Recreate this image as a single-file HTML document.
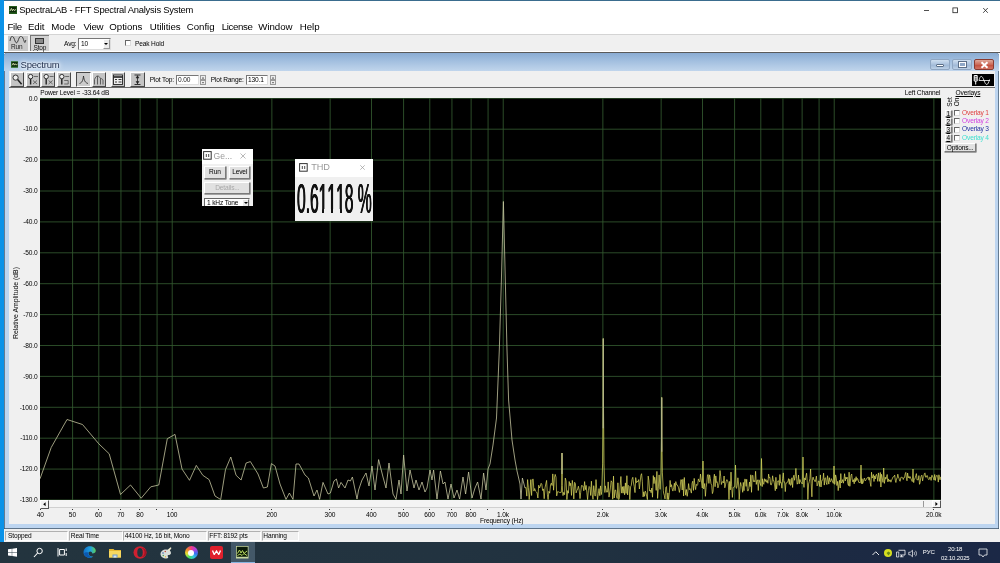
<!DOCTYPE html>
<html><head><meta charset="utf-8"><title>SpectraLAB</title>
<style>
*{box-sizing:border-box}
html,body{margin:0;padding:0}
body{width:1000px;height:563px;overflow:hidden;position:relative;background:#fff;font-family:"Liberation Sans",sans-serif;font-size:6.6px;letter-spacing:-0.15px;color:#000}
.a{position:absolute}
.t{position:absolute;white-space:nowrap;line-height:1}
#desk{left:0;top:0;width:4px;height:542px;background:#0a92e8}
#topline{left:4px;top:0;width:996px;height:0.800px;background:#3a6c8e}
#title{left:4px;top:1px;width:996px;height:18px;background:#fff}
#menu{left:4px;top:19px;width:996px;height:15px;background:#fff}
#menu .t{top:3.2px;font-size:9.7px;letter-spacing:-0.05px;margin-left:-0.7px}
#tb{left:4px;top:34px;width:996px;height:18px;background:#f0f0f0;border-top:1px solid #d4d4d4;border-bottom:1px solid #fff}
#mdiline{left:4px;top:52px;width:996px;height:1px;background:#5a5a5a}
/* child */
#child{left:4px;top:53px;width:995px;height:475.5px;background:#bdd5f0;border-radius:3px 3px 0 0;box-shadow:inset 0 0 0 0.7px #3f5468}
#ctitle{left:0;top:0;width:995px;height:18px;background:linear-gradient(180deg,#8aacd3 0,#9dbbdd 35%,#b3cbe6 75%,#c0d5ec 100%);border-radius:3px 3px 0 0}
#client{left:4.7px;top:18px;width:986px;height:453px;background:#f0f0f0}
#plot{left:40px;top:98px;width:901px;height:402px;background:#000;overflow:hidden}
.yl{position:absolute;left:10px;width:27.5px;text-align:right;font-size:6.6px;line-height:9px;white-space:nowrap}
.xl{position:absolute;top:510.5px;width:30px;text-align:center;font-size:6.6px;line-height:8px;white-space:nowrap}
.tick{position:absolute;top:508.5px;width:1px;height:1.5px;background:#333}
.btn{position:absolute;background:#c4c4c4;border:1px solid;border-color:#fff #484848 #484848 #fff}
.btn.dn{border-color:#484848 #fff #fff #484848;background:#cccccc}
#status{left:4px;top:529px;width:996px;height:13px;background:#f0f0f0}
#status .p{position:absolute;top:1.5px;height:10.5px;border:1px solid;border-color:#b0b0b0 #fff #fff #b0b0b0;font-size:6.6px;line-height:8px;padding-left:2px;white-space:nowrap}
#task{left:0;top:542px;width:1000px;height:21px;background:linear-gradient(90deg,#23343e 0,#223340 45%,#203140 60%,#1c2a42 82%,#1b2846 100%)}
.wb{position:absolute;background:#e1e1e1;border:1px solid;border-color:#fff #7a7a7a #7a7a7a #fff;box-shadow:0.5px 0.5px 0 #555;font-size:6.6px;text-align:center;white-space:nowrap}
</style></head><body><div id="root" style="position:absolute;left:0;top:0;width:1000px;height:563px;overflow:hidden;will-change:transform">
<div id="desk" class="a"></div>
<div id="title" class="a">
  <svg class="a" style="left:4.5px;top:5px" width="8" height="8" viewBox="0 0 8 8"><rect width="8" height="8" fill="#245c1c"/><rect x="0.8" y="1" width="6.4" height="5.4" fill="#0c2a0a"/><path d="M1 5 L2.4 2.4 L3.4 4.8 L4.4 3 L5.4 4.6 L7 3.4" stroke="#e8f0c0" stroke-width="0.8" fill="none"/></svg>
  <div class="t" style="left:15.300px;top:3.500px;font-size:9.4px;letter-spacing:-0.23px">SpectraLAB - FFT Spectral Analysis System</div>
  <svg class="a" style="left:915px;top:4px" width="75" height="12" viewBox="0 0 75 12"><path d="M5 5.5h5" stroke="#222" stroke-width="0.8" fill="none"/><rect x="33.9" y="2.9" width="4.6" height="4.8" stroke="#222" stroke-width="0.8" fill="none"/><path d="M64.2 3l4.6 4.8M68.8 3l-4.6 4.8" stroke="#222" stroke-width="0.8" fill="none"/></svg>
</div>
<div id="topline" class="a"></div>
<div id="menu" class="a">
  <div class="t" style="left:4.200px;letter-spacing:-0.300px">File</div>
  <div class="t" style="left:24.6px">Edit</div>
  <div class="t" style="left:48px">Mode</div>
  <div class="t" style="left:80.200px;letter-spacing:-0.250px">View</div>
  <div class="t" style="left:106px">Options</div>
  <div class="t" style="left:146.5px">Utilities</div>
  <div class="t" style="left:183.5px">Config</div>
  <div class="t" style="left:218.5px;letter-spacing:-0.400px">License</div>
  <div class="t" style="left:255px">Window</div>
  <div class="t" style="left:296.5px">Help</div>
</div>
<div id="tb" class="a">
  <div class="a" style="left:0;top:0;width:4px;height:16px;background:#fafafa"></div>
  <div class="a" style="left:4px;top:1px;width:20px;height:15px;background:#c9c9c9"></div>
  <svg class="a" style="left:5px;top:1px" width="18" height="8" viewBox="0 0 18 8"><path d="M1 5 C2 -1,4 -1,5.5 3.5 S8 8,9.5 3.5 S13 -1,14.5 3.5 S16 7,16.8 4" stroke="#333" stroke-width="0.9" fill="none"/></svg>
  <div class="t" style="left:7px;top:9px;font-size:6.5px;color:#222">Run</div>
  <div class="a" style="left:25.5px;top:0;width:19.5px;height:16px;background:#d2d2d2;border-left:1px solid #777;border-top:1px solid #777"></div>
  <div class="a" style="left:31px;top:3px;width:9px;height:5.5px;background:#8a8a8a;border:1px solid #333"></div>
  <div class="t" style="left:29.5px;top:9.5px;font-size:6.5px;color:#111"><u style="text-underline-offset:0.200px;text-decoration-thickness:0.600px">S</u>top</div>
  <div class="t" style="left:60px;top:5.800px;font-size:6.6px">Avg:</div>
  <div class="a" style="left:74px;top:2.500px;width:33px;height:12.300px;background:#fff;border:1px solid;border-color:#777 #ddd #ddd #777"></div>
  <div class="t" style="left:77px;top:5.5px;font-size:6.6px">10</div>
  <div class="a" style="left:98.5px;top:4px;width:7.5px;height:9.5px;background:#ececec;border:1px solid;border-color:#fff #999 #999 #fff"></div>
  <div class="a" style="left:100px;top:7.500px;width:0;height:0;border-left:2px solid transparent;border-right:2px solid transparent;border-top:2.5px solid #000"></div>
  <div class="a" style="left:120.5px;top:4.800px;width:6px;height:6px;background:#fff;border:1px solid;border-color:#666 #ddd #ddd #666"></div>
  <div class="t" style="left:131px;top:5.5px;font-size:6.6px">Peak Hold</div>
</div>
<div id="mdiline" class="a"></div>

<div id="child" class="a">
  <div id="ctitle" class="a"></div>
  <svg class="a" style="left:6.500px;top:8px" width="7.500" height="7" viewBox="0 0 8 7"><rect width="8" height="7" fill="#2a6a22"/><rect x="0.8" y="0.8" width="6.4" height="5" fill="#0c2a0a"/><path d="M1 4.4 L2.4 2 L3.4 4.2 L4.4 2.6 L5.4 4 L7 3" stroke="#e8f0c0" stroke-width="0.8" fill="none"/></svg>
  <div class="t" style="left:16.5px;top:7.2px;font-size:9.5px;letter-spacing:-0.2px;color:#1a2a4a;text-shadow:0 0 2px #fff,0 0 4px #fff,0 0 6px #fff">Spectrum</div>
  <!-- caption buttons -->
  <div class="a" style="left:925.5px;top:5.5px;width:20.5px;height:11.5px;border:1px solid #8fa6c2;border-radius:2px;background:linear-gradient(#cfdff0,#a9c0dc 50%,#9bb5d4 51%,#bcd0e6)"></div>
  <div class="a" style="left:932px;top:11px;width:8px;height:3px;background:#fff;border:0.5px solid #5c6f88;border-radius:1px"></div>
  <div class="a" style="left:947.5px;top:5.5px;width:20.5px;height:11.5px;border:1px solid #8fa6c2;border-radius:2px;background:linear-gradient(#cfdff0,#a9c0dc 50%,#9bb5d4 51%,#bcd0e6)"></div>
  <div class="a" style="left:955px;top:8.500px;width:6.500px;height:5.500px;background:#8fa8c8;border:1.300px solid #fff;outline:0.600px solid #5c6f88"></div>
  <div class="a" style="left:969.5px;top:5.5px;width:20.5px;height:11.5px;border:1px solid #8a3a30;border-radius:2px;background:linear-gradient(#e0aa9c,#cc6a58 50%,#c04c3a 51%,#d27464)"></div>
  <svg class="a" style="left:975.5px;top:7.5px" width="9" height="8" viewBox="0 0 9 8"><path d="M1.5 1.2l6 5.6M7.5 1.2l-6 5.6" stroke="#fff" stroke-width="1.9" fill="none"/></svg>
  <div id="client" class="a"></div>
</div>

<!-- child toolbar (page coords) -->
<div class="a" style="left:9px;top:87px;width:986px;height:1px;background:#6a6a6a"></div>
<div class="btn" style="left:10px;top:72px;width:14.3px;height:15px"></div>
<div class="btn" style="left:25.6px;top:72px;width:14.3px;height:15px"></div>
<div class="btn" style="left:41.2px;top:72px;width:14.3px;height:15px"></div>
<div class="btn" style="left:56.8px;top:72px;width:14.3px;height:15px"></div>
<div class="btn dn" style="left:76.2px;top:72px;width:14.5px;height:15px"></div>
<div class="btn" style="left:91.6px;top:72px;width:14.3px;height:15px"></div>
<div class="btn" style="left:110.6px;top:72px;width:14.6px;height:15px"></div>
<div class="btn" style="left:130px;top:72px;width:14.6px;height:15px"></div>
<svg class="a" style="left:10px;top:72px" width="136" height="15" viewBox="0 0 136 15">
  <g fill="none" stroke="#222" stroke-width="0.9">
    <circle cx="5.6" cy="5.6" r="2.6" fill="#eee"/><path d="M7.6 7.6l4 4.6" stroke-width="1.5"/>
    <circle cx="20.6" cy="4.6" r="2.2" fill="#eee"/><path d="M20.6 7v5.5" stroke-width="1.4"/><path d="M23 8.5l4 3.5m0-3.5l-4 3.5M24 4.5h4" stroke-width="0.7" stroke="#444"/>
    <circle cx="36.2" cy="4.6" r="2.2" fill="#eee"/><path d="M36.2 7v5.5" stroke-width="1.4"/><path d="M38.6 8.5l4 3.5m0-3.5l-4 3.5M39.6 4.5h4" stroke-width="0.7" stroke="#444"/>
    <circle cx="51.8" cy="4.6" r="2.2" fill="#eee"/><path d="M51.8 7v5.5" stroke-width="1.4"/><path d="M54.2 8.5h4v3.5h-4M55.2 4.5h4" stroke-width="0.7" stroke="#444"/>
    <path d="M69.500 11.500c2.400-.8 3.400-2.500 4-7.500c.7 5 1.800 6.700 4.500 7.500" stroke-width="0.800"/>
    <path d="M84.500 12.500v-5c1-2.500 2-3.500 3-3.500v8.500m0-8.500c1.500 0 2 1 3 2.500v6m2.500 0v-4.500c-.8-1.200-1.500-1.500-2.500-1.500" stroke="#444" stroke-width="0.8"/>
    <rect x="103.500" y="3" width="9" height="9.500" fill="#eee" stroke="#222"/><path d="M103.500 5h9" stroke-width="1.600"/><path d="M105 7.500h2m1.500 0h3M105 10h2m1.500 0h3" stroke-width="0.9"/>
    <path d="M124.500 3h6M124.500 12.500h6" stroke-width="0.9"/><path d="M127.500 3.500v8.500" stroke-width="0.8"/><path d="M126 6l1.500-2.200L129 6zM126 9.500l1.500 2.200L129 9.500z" fill="#222" stroke-width="0.5"/>
  </g>
</svg>
<div class="t" style="left:149.700px;top:76.5px;font-size:6.6px">Plot Top:</div>
<div class="a" style="left:176px;top:74.5px;width:22.5px;height:10.5px;background:#fff;border:1px solid;border-color:#777 #ddd #ddd #777"></div>
<div class="t" style="left:178px;top:76.5px;font-size:6.6px;color:#222">0.00</div>
<div class="a" style="left:200px;top:74.5px;width:6px;height:5.200px;background:#ececec;border:0.500px solid #999"></div>
<div class="a" style="left:200px;top:79.800px;width:6px;height:5.200px;background:#ececec;border:0.500px solid #999"></div>
<div class="t" style="left:210.800px;top:76.5px;font-size:6.6px">Plot Range:</div>
<div class="a" style="left:245.700px;top:74.5px;width:22.800px;height:10.5px;background:#fff;border:1px solid;border-color:#777 #ddd #ddd #777"></div>
<div class="t" style="left:248px;top:76.5px;font-size:6.6px">130.1</div>
<div class="a" style="left:270px;top:74.5px;width:6px;height:5.200px;background:#ececec;border:0.500px solid #999"></div>
<div class="a" style="left:270px;top:79.800px;width:6px;height:5.200px;background:#ececec;border:0.500px solid #999"></div>
<svg class="a" style="left:200px;top:74.500px" width="76" height="11" viewBox="0 0 76 11"><path d="M2 3.400l1-1.400l1 1.400zM2 7.200l1 1.400l1-1.400zM72 3.400l1-1.400l1 1.400zM72 7.200l1 1.400l1-1.400z" fill="#222"/></svg>
<!-- black icon top-right -->
<div class="a" style="left:972px;top:73.800px;width:22px;height:12px;background:#000"></div>
<svg class="a" style="left:972px;top:73.800px" width="22" height="12" viewBox="0 0 22 12"><path d="M2.200 1.500h3v5.500h-3zM3.700 7v3.500M2.200 3.200h3M2.200 5h3" stroke="#fff" stroke-width="1" fill="none"/><path d="M7 6.500c1.200-5.500 3-5.500 5 0s3.800 5.500 5.500-1M7 6.500h11" stroke="#fff" stroke-width="0.800" fill="none"/></svg>

<!-- plot -->
<div class="t" style="left:40.200px;top:89.700px;font-size:6.6px">Power Level = -33.64 dB</div>
<div class="t" style="left:904.700px;top:89.700px;font-size:6.6px">Left Channel</div>
<div id="plot" class="a">
<svg class="a" style="left:0;top:0" width="901" height="402" viewBox="0 0 901 402">
<g stroke="#33592f" stroke-width="0.85"><line x1="32.58" y1="0" x2="32.58" y2="402"/><line x1="58.79" y1="0" x2="58.79" y2="402"/><line x1="80.95" y1="0" x2="80.95" y2="402"/><line x1="100.14" y1="0" x2="100.14" y2="402"/><line x1="117.07" y1="0" x2="117.07" y2="402"/><line x1="132.22" y1="0" x2="132.22" y2="402"/><line x1="231.86" y1="0" x2="231.86" y2="402"/><line x1="290.15" y1="0" x2="290.15" y2="402"/><line x1="331.50" y1="0" x2="331.50" y2="402"/><line x1="363.58" y1="0" x2="363.58" y2="402"/><line x1="389.79" y1="0" x2="389.79" y2="402"/><line x1="411.95" y1="0" x2="411.95" y2="402"/><line x1="431.14" y1="0" x2="431.14" y2="402"/><line x1="448.07" y1="0" x2="448.07" y2="402"/><line x1="463.22" y1="0" x2="463.22" y2="402"/><line x1="562.86" y1="0" x2="562.86" y2="402"/><line x1="621.15" y1="0" x2="621.15" y2="402"/><line x1="662.50" y1="0" x2="662.50" y2="402"/><line x1="694.58" y1="0" x2="694.58" y2="402"/><line x1="720.79" y1="0" x2="720.79" y2="402"/><line x1="742.95" y1="0" x2="742.95" y2="402"/><line x1="762.14" y1="0" x2="762.14" y2="402"/><line x1="779.07" y1="0" x2="779.07" y2="402"/><line x1="794.22" y1="0" x2="794.22" y2="402"/><line x1="893.86" y1="0" x2="893.86" y2="402"/><line x1="0" y1="0.30" x2="901" y2="0.30"/><line x1="0" y1="31.20" x2="901" y2="31.20"/><line x1="0" y1="62.10" x2="901" y2="62.10"/><line x1="0" y1="93.00" x2="901" y2="93.00"/><line x1="0" y1="123.90" x2="901" y2="123.90"/><line x1="0" y1="154.80" x2="901" y2="154.80"/><line x1="0" y1="185.70" x2="901" y2="185.70"/><line x1="0" y1="216.60" x2="901" y2="216.60"/><line x1="0" y1="247.49" x2="901" y2="247.49"/><line x1="0" y1="278.39" x2="901" y2="278.39"/><line x1="0" y1="309.29" x2="901" y2="309.29"/><line x1="0" y1="340.19" x2="901" y2="340.19"/><line x1="0" y1="371.09" x2="901" y2="371.09"/><line x1="0" y1="401.99" x2="901" y2="401.99"/></g>
<polyline fill="none" stroke="#c9c9a2" stroke-width="0.78" stroke-linejoin="round" points="0.0,380.8 11.2,349.5 27.0,321.5 42.5,326.5 58.8,345.8 69.2,355.8 80.5,396.5 90.5,387.0 101.2,400.2 110.8,388.8 118.8,387.0 127.3,340.7 135.0,336.4 142.0,371.0 149.5,382.3 156.3,367.4 162.8,377.3 169.1,381.6 175.0,398.0 180.7,401.5 185.5,371.5 190.8,359.0 196.1,377.3 201.1,382.0 206.1,365.0 210.4,363.6 218.0,376.0 223.4,390.0 227.4,389.0 231.4,365.6 235.0,368.0 240.0,386.0 246.0,401.4 249.4,395.0 253.0,401.4 256.0,366.0 259.0,366.0 265.0,377.0 268.4,380.0 274.0,398.0 277.0,392.0 279.6,401.4 283.0,384.4 288.0,396.0 290.4,395.0 294.0,383.0 296.4,381.0 298.6,390.0 301.0,384.4 305.0,390.0 308.0,382.0 310.4,383.0 312.4,379.0 317.0,401.0 318.6,392.0 322.0,382.0 326.0,375.0 329.0,388.0 332.0,368.0 335.0,392.0 338.6,361.6 343.0,379.0 346.0,390.0 349.0,365.0 353.0,396.0 356.0,401.4 359.0,382.0 361.0,396.0 363.6,357.0 367.0,393.0 370.0,372.0 374.0,390.0 376.0,382.0 379.0,392.0 382.0,384.0 385.0,394.0 387.0,390.0 390.0,372.0 392.0,382.0 393.6,372.0 397.0,401.0 400.4,373.0 403.0,386.0 405.0,384.0 408.0,401.0 411.0,386.0 414.0,400.0 417.0,392.0 419.6,401.0 423.0,379.0 425.6,396.0 428.6,374.0 432.0,400.0 435.0,390.0 437.6,384.0 441.0,401.0 443.6,375.0 446.0,392.0 448.0,371.0 450.0,366.0 453.0,347.0 456.5,320.0 459.3,252.0 461.4,182.0 463.4,103.5 465.3,182.0 467.0,252.0 468.6,302.0 472.0,342.0 475.0,362.0 477.0,373.0 480.0,386.0 481.0,401.0 482.4,380.0 485.0,390.0"/>
<polyline fill="none" stroke="#e0dc60" stroke-width="0.7" stroke-linejoin="round" points="485.0,390.0 486.0,389.5 486.8,398.1 487.6,381.6 488.4,389.7 489.2,401.6 490.0,392.8 490.8,381.6 491.6,397.5 492.4,381.4 493.2,381.1 493.9,393.1 494.7,390.5 495.5,393.1 496.3,393.8 497.1,395.0 497.9,400.0 498.7,387.2 499.5,390.0 500.3,388.1 501.1,385.3 501.8,386.1 502.6,392.5 503.4,390.9 504.2,400.7 505.0,389.9 505.8,386.0 506.6,382.4 507.4,396.9 508.1,401.6 508.9,393.3 509.7,395.2 510.5,387.0 511.3,385.1 512.1,387.5 512.8,375.9 513.6,392.2 514.4,379.9 515.2,376.4 516.0,379.2 516.7,397.9 517.5,393.7 518.3,393.7 519.1,394.3 519.9,394.5 521.3,394.3 521.7,387.2 521.8,372.7 522.0,355.0 522.2,372.7 522.3,387.2 522.7,395.3 523.0,397.6 523.8,394.3 524.6,396.7 525.3,380.1 526.1,382.9 526.9,401.6 527.7,392.6 528.4,395.2 529.2,383.5 530.0,387.8 530.7,385.2 531.5,397.4 532.3,382.4 533.1,388.7 533.8,400.9 534.6,384.3 535.4,385.6 536.1,394.9 536.9,392.6 537.7,391.0 538.4,388.2 539.2,392.1 540.0,400.6 540.7,394.3 541.5,387.5 542.3,387.8 543.0,388.0 543.8,392.8 544.6,383.6 545.3,391.7 546.1,387.4 546.9,394.9 547.6,401.6 548.4,392.5 549.1,388.5 549.9,389.3 550.7,397.5 551.4,383.2 552.2,396.3 553.0,401.3 553.7,387.7 554.5,394.5 555.2,398.1 556.0,381.6 556.7,390.9 557.5,401.6 558.3,395.8 559.0,390.6 559.8,397.7 560.5,387.9 561.3,396.6 561.7,393.5 562.6,365.9 563.1,309.4 563.3,240.6 563.5,309.4 564.0,365.9 564.9,394.5 565.2,387.8 566.0,391.0 566.7,394.2 567.5,394.0 568.2,383.9 569.0,399.1 569.7,395.0 570.5,389.1 571.2,382.8 572.0,384.2 572.7,401.2 573.5,378.1 574.2,400.0 575.0,392.1 575.7,392.1 576.4,397.8 577.2,400.5 577.9,384.8 578.7,401.6 579.4,399.9 580.2,387.3 580.9,378.5 581.7,395.1 582.4,388.7 583.1,395.2 583.9,388.3 584.6,396.8 585.4,384.9 586.1,395.4 586.9,377.7 587.6,396.9 588.3,387.4 589.1,388.3 589.8,401.6 590.6,388.8 591.3,387.3 592.0,381.4 592.8,379.3 593.5,385.0 594.2,388.4 595.0,394.6 595.7,379.6 596.5,384.7 597.2,383.2 597.9,383.9 598.7,381.6 599.4,391.0 600.1,384.6 600.9,377.3 601.6,375.7 602.3,383.2 603.1,398.9 603.8,393.8 604.5,398.3 605.3,393.1 606.0,394.9 606.7,398.1 607.4,401.6 608.2,378.1 608.9,382.7 609.6,393.1 610.4,392.1 611.1,394.7 611.8,390.0 612.5,399.2 613.3,377.6 614.0,385.6 614.7,379.2 615.4,383.0 616.2,392.4 616.9,373.4 617.6,400.4 618.3,390.7 619.1,376.9 620.1,391.4 621.0,374.9 621.5,340.8 621.7,299.4 621.9,340.8 622.4,374.9 623.3,392.4 623.6,395.1 624.3,397.3 625.0,400.9 625.8,389.4 626.5,388.6 627.2,401.6 627.9,394.9 628.6,401.6 629.4,394.5 630.1,382.4 630.8,389.0 631.5,386.7 632.2,390.9 632.9,393.1 633.6,389.7 634.4,385.2 635.1,392.7 635.8,383.6 636.5,386.8 637.2,386.8 637.9,388.1 638.6,389.8 639.4,394.4 640.1,389.9 640.8,381.7 641.5,381.9 642.2,392.0 642.9,381.3 643.6,398.0 644.3,379.5 645.0,390.3 645.7,397.2 646.4,391.5 647.2,398.3 647.9,393.4 648.6,385.6 649.3,391.6 650.0,390.6 650.7,392.8 651.4,395.1 652.1,385.2 652.8,383.2 653.5,392.4 654.2,380.4 654.9,387.5 655.6,391.6 656.3,386.3 657.0,387.5 657.7,386.5 658.4,380.9 659.1,382.9 659.8,383.9 660.5,376.1 662.3,390.0 663.0,363.0 663.7,391.0 664.0,389.7 664.7,385.5 665.4,398.3 666.1,389.3 666.8,384.8 667.5,376.9 668.2,376.5 668.9,385.4 669.6,376.9 670.3,380.5 671.0,385.8 671.7,387.2 672.4,395.6 673.1,393.3 673.8,380.4 674.4,376.2 675.1,388.7 675.8,377.9 676.5,384.4 677.2,383.8 677.9,389.9 678.6,387.6 679.3,384.4 680.0,372.5 680.7,378.2 681.4,386.5 682.1,384.0 682.8,383.6 683.4,384.9 684.1,378.0 684.8,389.8 685.5,386.9 686.2,383.2 686.9,381.6 687.6,382.7 688.3,385.5 689.0,401.6 689.7,383.4 690.3,391.9 691.0,374.1 691.7,388.5 692.4,399.4 693.1,389.5 694.8,388.7 695.5,367.0 696.2,389.7 696.5,390.4 697.2,387.6 697.9,379.8 698.6,386.0 699.2,401.6 699.9,391.5 700.6,384.5 701.3,387.9 702.0,388.6 702.7,394.3 703.3,384.4 704.0,392.7 704.7,381.2 705.4,381.3 706.1,388.4 706.7,381.3 707.4,392.7 708.1,393.0 708.8,390.7 709.5,384.0 710.1,388.6 710.8,376.8 711.5,394.3 712.2,377.8 712.9,377.3 713.5,383.6 714.2,382.6 714.9,383.9 715.6,373.3 716.3,386.4 716.9,382.8 717.6,381.8 718.3,392.5 719.0,381.8 720.8,387.6 721.5,360.5 722.2,388.6 722.5,380.8 723.2,385.1 723.8,386.3 724.5,380.7 725.2,383.5 725.9,381.4 726.5,384.3 727.2,382.4 727.9,385.3 728.6,376.1 729.2,379.9 729.9,379.3 730.6,386.5 731.2,387.1 731.9,384.7 732.6,377.8 733.3,383.0 733.9,382.7 734.6,386.9 735.3,392.7 735.9,379.3 736.6,390.9 737.3,384.5 737.9,382.8 738.6,382.8 739.3,387.4 739.9,376.5 740.6,385.0 741.3,384.6 741.9,390.2 742.6,380.7 743.3,374.9 743.9,384.3 744.6,383.8 745.3,393.6 745.9,385.2 746.6,385.2 747.3,383.9 747.9,383.7 748.6,380.6 749.3,386.4 749.9,381.2 750.6,387.4 751.3,386.4 751.9,379.8 752.6,389.5 753.2,380.0 753.9,377.2 754.6,382.3 755.2,378.4 755.9,370.4 756.6,380.3 757.2,386.2 757.9,384.3 758.5,377.0 759.2,385.9 759.9,381.5 760.5,383.4 762.3,386.0 763.0,359.0 763.7,387.0 764.0,389.4 764.7,379.9 765.3,382.0 766.0,378.0 766.6,375.2 767.3,384.6 767.9,401.6 768.6,386.0 769.3,383.4 769.9,380.6 770.6,371.0 771.2,385.8 771.9,398.8 772.5,380.2 773.2,379.1 773.8,381.9 774.5,382.0 775.1,383.8 775.8,381.2 776.4,378.1 777.1,387.9 777.8,386.3 778.4,383.1 779.1,383.0 779.7,388.5 780.4,376.9 781.0,389.0 781.7,383.1 782.3,381.9 783.0,381.4 783.6,375.1 784.3,387.1 784.9,380.4 785.6,379.7 786.2,384.5 786.9,386.6 787.5,377.7 788.2,381.9 788.8,386.1 789.4,379.7 790.1,383.5 790.7,383.7 791.4,380.6 793.3,385.4 794.0,368.0 794.7,386.4 795.0,384.4 795.6,376.9 796.3,380.1 796.9,387.5 797.6,383.4 798.2,392.6 798.9,386.2 799.5,382.3 800.2,390.0 800.8,375.6 801.4,385.0 802.1,383.8 802.7,381.6 803.4,385.2 804.0,381.1 804.6,375.7 805.3,382.9 805.9,379.1 806.6,380.9 807.2,379.2 807.8,385.6 808.5,387.6 809.1,374.2 809.8,388.3 810.4,383.0 811.0,377.3 811.7,376.0 812.3,382.1 813.0,384.0 813.6,381.7 814.2,385.8 814.9,380.3 815.5,383.6 816.1,378.7 816.8,382.5 817.4,380.4 818.1,381.6 818.7,384.3 820.3,384.8 821.0,367.0 821.7,385.8 822.0,380.7 822.6,385.7 823.3,384.0 823.9,381.0 824.5,380.0 825.2,383.0 825.8,382.2 826.4,381.3 827.1,379.9 827.7,379.8 828.3,378.9 829.0,382.2 829.6,379.4 830.2,384.8 830.9,388.4 831.5,374.2 832.1,380.1 832.7,378.9 833.4,376.5 834.0,383.5 834.6,377.9 835.3,381.0 835.9,377.1 836.5,376.3 837.1,378.5 837.8,383.4 838.4,374.9 839.0,379.7 839.7,383.4 840.3,374.5 840.9,389.0 841.5,376.3 843.0,384.4 843.7,370.0 844.4,385.4 844.7,383.3 845.3,379.2 845.9,381.2 846.6,379.0 847.2,376.5 847.8,383.8 848.4,380.9 849.1,383.5 849.7,382.0 850.3,381.9 850.9,384.2 851.6,382.1 852.2,381.0 852.8,379.2 853.4,378.8 854.0,378.7 854.7,377.1 855.3,382.2 855.9,384.5 856.5,380.7 857.1,380.5 857.8,376.2 858.4,379.0 859.0,380.3 859.6,382.8 860.2,383.3 860.9,379.4 861.5,379.3 862.1,379.2 862.7,379.9 863.3,381.5 863.9,379.5 864.6,379.4 865.2,375.9 865.8,374.4 866.4,380.2 867.0,382.8 867.6,375.0 868.3,379.8 868.9,378.5 869.5,380.3 870.1,378.6 870.7,380.2 872.3,383.6 873.0,371.0 873.7,384.6 874.0,381.7 874.6,381.3 875.2,379.9 875.8,377.6 876.4,375.6 877.1,382.1 877.7,381.7 878.3,381.9 878.9,377.6 879.5,386.3 880.1,384.7 880.7,380.0 881.3,377.8 881.9,377.1 882.6,382.9 883.2,379.2 883.8,378.6 884.4,375.6 885.0,374.9 885.6,379.1 886.2,379.3 886.8,377.6 887.4,377.7 888.0,380.4 888.6,381.6 889.2,381.5 889.8,379.0 890.5,379.5 891.1,382.4 891.7,377.4 892.3,377.5 892.9,379.0 893.5,380.4 894.1,382.0 894.7,376.5 895.3,382.5 895.9,379.1 896.5,377.6 897.1,377.2 897.7,378.8 898.3,384.1 898.9,376.8 899.5,379.7 900.1,381.8 900.7,378.9 901.3,379.7"/>
<line stroke="#b4b488" stroke-width="1.3" x1="522.0" y1="355.0" x2="522.0" y2="376.0"/><line stroke="#b4b488" stroke-width="1.3" x1="563.3" y1="240.6" x2="563.3" y2="330.2"/><line stroke="#b4b488" stroke-width="1.3" x1="621.7" y1="299.4" x2="621.7" y2="353.8"/>
</svg>
</div>
<div class="yl" style="top:93.5px">0.0</div><div class="yl" style="top:124.4px">-10.0</div><div class="yl" style="top:155.3px">-20.0</div><div class="yl" style="top:186.2px">-30.0</div><div class="yl" style="top:217.1px">-40.0</div><div class="yl" style="top:248.0px">-50.0</div><div class="yl" style="top:278.9px">-60.0</div><div class="yl" style="top:309.8px">-70.0</div><div class="yl" style="top:340.7px">-80.0</div><div class="yl" style="top:371.6px">-90.0</div><div class="yl" style="top:402.5px">-100.0</div><div class="yl" style="top:433.4px">-110.0</div><div class="yl" style="top:464.3px">-120.0</div><div class="yl" style="top:495.2px">-130.0</div>
<div class="t" style="left:11.500px;top:299.500px;font-size:6.9px;letter-spacing:0;transform:translate(-50%,-50%) rotate(-90deg);left:15.500px;top:303px">Relative Amplitude (dB)</div>
<!-- scrollbar -->
<div class="a" style="left:40px;top:500px;width:901px;height:8px;background:#f4f4f4;border-bottom:1px solid #d0d0d0"></div>
<div class="a" style="left:39.500px;top:500px;width:9px;height:8.500px;background:#f4f4f4;border:1px solid;border-color:#fff #555 #555 #fff"></div>
<div class="a" style="left:932px;top:500px;width:9px;height:8px;background:#f4f4f4;border:1px solid;border-color:#fff #555 #555 #fff"></div>
<div class="a" style="left:923px;top:501px;width:1px;height:6px;background:#999"></div>
<svg class="a" style="left:39.500px;top:500px" width="902" height="9" viewBox="0 0 902 9"><path d="M5.600 2.200v4l-2.400-2zM895.400 2v4l2.400-2z" fill="#000"/></svg>
<div class="tick" style="left:39.8px"></div><div class="xl" style="left:25.3px">40</div><div class="tick" style="left:71.9px"></div><div class="xl" style="left:57.4px">50</div><div class="tick" style="left:98.1px"></div><div class="xl" style="left:83.6px">60</div><div class="tick" style="left:120.2px"></div><div class="xl" style="left:105.7px">70</div><div class="tick" style="left:139.4px"></div><div class="xl" style="left:124.9px">80</div><div class="tick" style="left:156.4px"></div><div class="tick" style="left:171.5px"></div><div class="xl" style="left:157.0px">100</div><div class="tick" style="left:271.2px"></div><div class="xl" style="left:256.7px">200</div><div class="tick" style="left:329.4px"></div><div class="xl" style="left:314.9px">300</div><div class="tick" style="left:370.8px"></div><div class="xl" style="left:356.3px">400</div><div class="tick" style="left:402.9px"></div><div class="xl" style="left:388.4px">500</div><div class="tick" style="left:429.1px"></div><div class="xl" style="left:414.6px">600</div><div class="tick" style="left:451.2px"></div><div class="xl" style="left:436.7px">700</div><div class="tick" style="left:470.4px"></div><div class="xl" style="left:455.9px">800</div><div class="tick" style="left:487.4px"></div><div class="tick" style="left:502.5px"></div><div class="xl" style="left:488.0px">1.0k</div><div class="tick" style="left:602.2px"></div><div class="xl" style="left:587.7px">2.0k</div><div class="tick" style="left:660.4px"></div><div class="xl" style="left:645.9px">3.0k</div><div class="tick" style="left:701.8px"></div><div class="xl" style="left:687.3px">4.0k</div><div class="tick" style="left:733.9px"></div><div class="xl" style="left:719.4px">5.0k</div><div class="tick" style="left:760.1px"></div><div class="xl" style="left:745.6px">6.0k</div><div class="tick" style="left:782.2px"></div><div class="xl" style="left:767.7px">7.0k</div><div class="tick" style="left:801.4px"></div><div class="xl" style="left:786.9px">8.0k</div><div class="tick" style="left:818.4px"></div><div class="tick" style="left:833.5px"></div><div class="xl" style="left:819.0px">10.0k</div><div class="tick" style="left:933.2px"></div><div class="xl" style="left:918.7px">20.0k</div>
<div class="t" style="left:480px;top:518px;font-size:6.6px">Frequency (Hz)</div>

<!-- overlays panel -->
<div class="t" style="left:955.500px;top:89.700px;font-size:6.6px;text-decoration:underline">Overlays</div>
<div class="t" style="font-size:6.500px;transform:translate(-50%,-50%) rotate(-90deg);left:949.500px;top:101.700px">Set</div>
<div class="t" style="font-size:6.500px;transform:translate(-50%,-50%) rotate(-90deg);left:956.500px;top:102.200px">On</div>
<div class="wb" style="left:945px;top:109.500px;width:6.500px;height:7.200px;line-height:6px;font-size:6.500px"><u>1</u></div>
<div class="wb" style="left:945px;top:117.800px;width:6.500px;height:7.200px;line-height:6px;font-size:6.500px"><u>2</u></div>
<div class="wb" style="left:945px;top:126.100px;width:6.500px;height:7.200px;line-height:6px;font-size:6.500px"><u>3</u></div>
<div class="wb" style="left:945px;top:134.400px;width:6.500px;height:7.200px;line-height:6px;font-size:6.500px"><u>4</u></div>
<div class="a" style="left:954px;top:110px;width:6px;height:6px;background:#fff;border:1px solid;border-color:#666 #ddd #ddd #666"></div>
<div class="a" style="left:954px;top:118.300px;width:6px;height:6px;background:#fff;border:1px solid;border-color:#666 #ddd #ddd #666"></div>
<div class="a" style="left:954px;top:126.600px;width:6px;height:6px;background:#fff;border:1px solid;border-color:#666 #ddd #ddd #666"></div>
<div class="a" style="left:954px;top:134.900px;width:6px;height:6px;background:#fff;border:1px solid;border-color:#666 #ddd #ddd #666"></div>
<div class="t" style="left:962px;top:109.700px;font-size:6.6px;color:#e04040">Overlay 1</div>
<div class="t" style="left:962px;top:118px;font-size:6.6px;color:#d040e0">Overlay 2</div>
<div class="t" style="left:962px;top:126.300px;font-size:6.6px;color:#2030a0">Overlay 3</div>
<div class="t" style="left:962px;top:134.600px;font-size:6.6px;color:#40e0d0">Overlay 4</div>
<div class="wb" style="left:943.800px;top:142.800px;width:32.500px;height:8.800px;line-height:7px">Options...</div>

<!-- Ge... window -->
<div class="a" style="left:202px;top:148.700px;width:51.300px;height:57.700px;background:#f0f0f0;overflow:hidden">
  <div class="a" style="left:0;top:0;width:52px;height:15.300px;background:#fff"></div>
  <svg class="a" style="left:1px;top:2.500px" width="9" height="9" viewBox="0 0 9 9"><rect x="0.600" y="0.600" width="7.600" height="7.600" fill="#fff" stroke="#333" stroke-width="1"/><path d="M3.300 3v3M5.700 3v3" stroke="#333" stroke-width="0.900"/></svg>
  <div class="t" style="left:11.500px;top:3.400px;font-size:8.600px;letter-spacing:0;color:#9a9a9a">Ge...</div>
  <svg class="a" style="left:37.500px;top:4.500px" width="6" height="6" viewBox="0 0 6 6"><path d="M0.500 0.500l5 5M5.500 0.500l-5 5" stroke="#999" stroke-width="0.700"/></svg>
  <div class="wb" style="left:2.200px;top:17.500px;width:21.400px;height:12.500px;line-height:10.500px">Run</div>
  <div class="wb" style="left:27px;top:17.500px;width:21.400px;height:12.500px;line-height:10.500px">Level</div>
  <div class="wb" style="left:2.200px;top:33.300px;width:46.200px;height:12px;line-height:10px;color:#a8a8a8">Details...</div>
  <div class="a" style="left:2.200px;top:49px;width:45.600px;height:12px;background:#fff;border:1px solid;border-color:#666 #ddd #ddd #666"></div>
  <div class="t" style="left:5px;top:51.200px;font-size:6.6px">1 kHz Tone</div>
  <div class="a" style="left:39.500px;top:50.500px;width:7.500px;height:9px;background:#e8e8e8;border:1px solid;border-color:#fff #666 #666 #fff"></div>
  <div class="a" style="left:41.500px;top:53.500px;width:0;height:0;border-left:2px solid transparent;border-right:2px solid transparent;border-top:2.500px solid #000"></div>
</div>
<!-- THD window -->
<div class="a" style="left:295px;top:158.500px;width:78px;height:62.300px;background:#f0f0f0;overflow:hidden">
  <div class="a" style="left:0;top:0;width:78px;height:18.500px;background:#fff"></div>
  <svg class="a" style="left:4px;top:4.500px" width="9" height="9" viewBox="0 0 9 9"><rect x="0.600" y="0.600" width="7.600" height="7.600" fill="#fff" stroke="#333" stroke-width="1"/><path d="M3.300 3v3M5.700 3v3" stroke="#333" stroke-width="0.900"/></svg>
  <div class="t" style="left:16.300px;top:4.700px;font-size:9.200px;color:#9a9a9a">THD</div>
  <svg class="a" style="left:65.300px;top:6.500px" width="5" height="5" viewBox="0 0 5 5"><path d="M0.300 0.300l4.400 4.400M4.700 0.300l-4.400 4.400" stroke="#999" stroke-width="0.700"/></svg>
  <div class="t" style="left:1.900px;top:19.200px;font-size:42px;font-kerning:none;transform-origin:0 0;transform:scaleX(0.374);color:#111;text-shadow:1px 0 0 #111,-0.800px 0 0 #111">0.61118 %</div>
  <div class="a" style="left:24.03px;top:50.44px;width:3.12px;height:4.36px;background:#f0f0f0"></div><div class="a" style="left:29.40px;top:50.44px;width:6.54px;height:4.36px;background:#f0f0f0"></div><div class="a" style="left:38.09px;top:50.44px;width:6.57px;height:4.36px;background:#f0f0f0"></div><div class="a" style="left:46.90px;top:50.44px;width:2.97px;height:4.36px;background:#f0f0f0"></div>
</div>

<!-- status bar -->
<div id="status" class="a">
  <div class="p" style="left:1px;width:63px">Stopped</div>
  <div class="p" style="left:65px;width:53.500px;padding-left:0.800px">Real Time</div>
  <div class="p" style="left:119.200px;width:83.800px;padding-left:0.500px">44100 Hz, 16 bit, Mono</div>
  <div class="p" style="left:203.500px;width:53.500px;padding-left:0.800px">FFT: 8192 pts</div>
  <div class="p" style="left:257.500px;width:37px;padding-left:0.800px">Hanning</div>
</div>

<!-- taskbar -->
<div id="task" class="a">
  <!-- start -->
  <svg class="a" style="left:8px;top:6px" width="9.200" height="8.800" viewBox="0 0 92 88"><path d="M0 12L38 7v34H0zM42 6.400L92 0v41H42zM0 45h38v34L0 74zM42 45h50v43L42 81z" fill="#fff"/></svg>
  <!-- search -->
  <svg class="a" style="left:32.500px;top:5px" width="11" height="11" viewBox="0 0 11 11"><circle cx="6.600" cy="4" r="2.700" stroke="#fff" stroke-width="1" fill="none"/><path d="M4.600 6l-3.600 4" stroke="#fff" stroke-width="1.100"/></svg>
  <!-- task view -->
  <svg class="a" style="left:57px;top:5px" width="11" height="11" viewBox="0 0 11 11"><path d="M2.600 2.500h4.800v5.500h-4.800zM1 1v8.500M9.200 1.500v2.500M9.200 6v3" stroke="#fff" stroke-width="1" fill="none"/></svg>
  <!-- edge -->
  <svg class="a" style="left:82.500px;top:4px" width="13.500" height="12" viewBox="0 0 27 24"><defs><linearGradient id="eg" x1="0" y1="0" x2="1" y2="0"><stop offset="0" stop-color="#1170c8"/><stop offset="0.550" stop-color="#1fa0e0"/><stop offset="1" stop-color="#5fd058"/></linearGradient></defs><path d="M13.500 0.500C6.500 0.500 1 6 1 12.500S6.500 23.500 13 23.500c3 0 5.500-1 7.500-2.500c-5 1-9.500-2-9.500-6.500c0-2 1.500-3.500 3.500-3.500s4 1.500 4 4c4 0 7-2 7-5.500C25.500 4.500 20 0.500 13.500 0.500z" fill="url(#eg)"/><path d="M2 15c1 5 5.500 8.500 11 8.500c3 0 5.500-1 7.500-2.500c-6 1.500-11-2-10-8c-3-1-7-0.500-8.500 2z" fill="#0c58b0"/></svg>
  <!-- explorer -->
  <svg class="a" style="left:108.500px;top:5.500px" width="12" height="10" viewBox="0 0 24 20"><path d="M0 2h9l2 2h13v15H0z" fill="#e8b830"/><path d="M0 6h24v13H0z" fill="#f7d860"/><path d="M7 13h10v6H7z" fill="#6a98c8"/><path d="M9 15h6v4H9z" fill="#d8e4f0"/></svg>
  <!-- opera -->
  <svg class="a" style="left:133px;top:4px" width="14" height="13" viewBox="0 0 28 26"><ellipse cx="14" cy="13" rx="13" ry="12.500" fill="#d02030"/><ellipse cx="14" cy="13" rx="5.500" ry="9" fill="#22343f"/><path d="M17 3.500c4 2 6 5.500 6 9.500s-2 7.500-6 9.500c6-.5 10-4.500 10-9.500S23 4 17 3.500z" fill="#a01424"/></svg>
  <!-- paint -->
  <svg class="a" style="left:159px;top:4.500px" width="13.500" height="12" viewBox="0 0 27 24"><path d="M3 14c0-5 5-9 11-9s10 3 10 7c0 3-3 4-5 4s-2 2-1 3.500s0 3.500-3 3.500C8 23 3 19.500 3 14z" fill="#d8dcd8"/><path d="M17 6l6-5.500l2 1.500-4.500 6.500z" fill="#f0ead0"/><circle cx="8" cy="12" r="1.600" fill="#3a6ab0"/><circle cx="12.500" cy="9" r="1.500" fill="#c04030"/><circle cx="8.500" cy="17" r="1.500" fill="#40a050"/><circle cx="13" cy="19.500" r="1.400" fill="#e0c030"/></svg>
  <!-- color wheel -->
  <div class="a" style="left:184.500px;top:4.200px;width:13px;height:13px;border-radius:50%;background:conic-gradient(#f03a8a,#b040e0,#3a70f0,#30c8e0,#40e060,#e8e030,#f08030,#f03a8a)"></div>
  <div class="a" style="left:188px;top:7.700px;width:6px;height:6px;border-radius:50%;background:#fff"></div>
  <!-- wps -->
  <div class="a" style="left:210px;top:4px;width:13px;height:13px;border-radius:2px;background:#e0202c"></div>
  <svg class="a" style="left:212px;top:8px" width="9" height="5" viewBox="0 0 18 10"><path d="M1 1l3.500 8L9 2l4.500 7L17 1" stroke="#fff" stroke-width="2.600" fill="none"/></svg>
  <!-- active app -->
  <div class="a" style="left:230.500px;top:0;width:24px;height:21px;background:#435868"></div>
  <div class="a" style="left:230.500px;top:19.500px;width:24px;height:1.500px;background:#86b4e0"></div>
  <svg class="a" style="left:236px;top:4px" width="12.500" height="12.500" viewBox="0 0 25 25"><rect width="25" height="25" fill="#c8d8a0"/><rect x="1.500" y="1.500" width="22" height="20" fill="#0a1a08"/><path d="M3 15L7 8l3 6l3-5l3 6l6-5M3 19l5-3l4 3l4-4l6 4" stroke="#b8d860" stroke-width="2" fill="none"/></svg>
  <!-- tray -->
  <svg class="a" style="left:872px;top:8.500px" width="7.500" height="4.500" viewBox="0 0 15 9"><path d="M1 8l6.500-6.500L14 8" stroke="#fff" stroke-width="1.800" fill="none"/></svg>
  <div class="a" style="left:883.700px;top:6.500px;width:8.800px;height:8.800px;border-radius:50%;background:#d8e020"></div>
  <svg class="a" style="left:885.700px;top:8.500px" width="5" height="5" viewBox="0 0 10 10"><path d="M1 4l4-3l4 3l-4 5z" fill="#6a8a18"/></svg>
  <svg class="a" style="left:896px;top:6.500px" width="9.500" height="9" viewBox="0 0 19 18"><path d="M5 2.500h13v9.500H8M11 12v3.500M8 15.500h7" stroke="#fff" stroke-width="1.600" fill="none"/><path d="M1 6h4.500v10H1z" stroke="#fff" stroke-width="1.400" fill="#1b2945"/></svg>
  <svg class="a" style="left:908px;top:6.500px" width="10" height="9" viewBox="0 0 20 18"><path d="M1.500 6.500h3L9 2.500v13L4.500 11.500h-3z" stroke="#fff" stroke-width="1.400" fill="none"/><path d="M12 6c1.400 1.600 1.400 4.400 0 6M14.800 3.500c2.800 3 2.800 8 0 11" stroke="#fff" stroke-width="1.300" fill="none"/></svg>
  <div class="t" style="left:922.800px;top:7.300px;font-size:6.100px;color:#fff;letter-spacing:-0.100px">РУС</div>
  <div class="t" style="left:948px;top:3.700px;font-size:6px;color:#fff;letter-spacing:-0.150px">20:18</div>
  <div class="t" style="left:941px;top:12.600px;font-size:6px;color:#fff;letter-spacing:-0.150px">02.10.2025</div>
  <svg class="a" style="left:977.500px;top:5.500px" width="10" height="10" viewBox="0 0 20 20"><path d="M2 2h16v12h-5l-3 4l-3-4H2z" stroke="#fff" stroke-width="1.500" fill="none"/></svg>
</div>
</div></body></html>
